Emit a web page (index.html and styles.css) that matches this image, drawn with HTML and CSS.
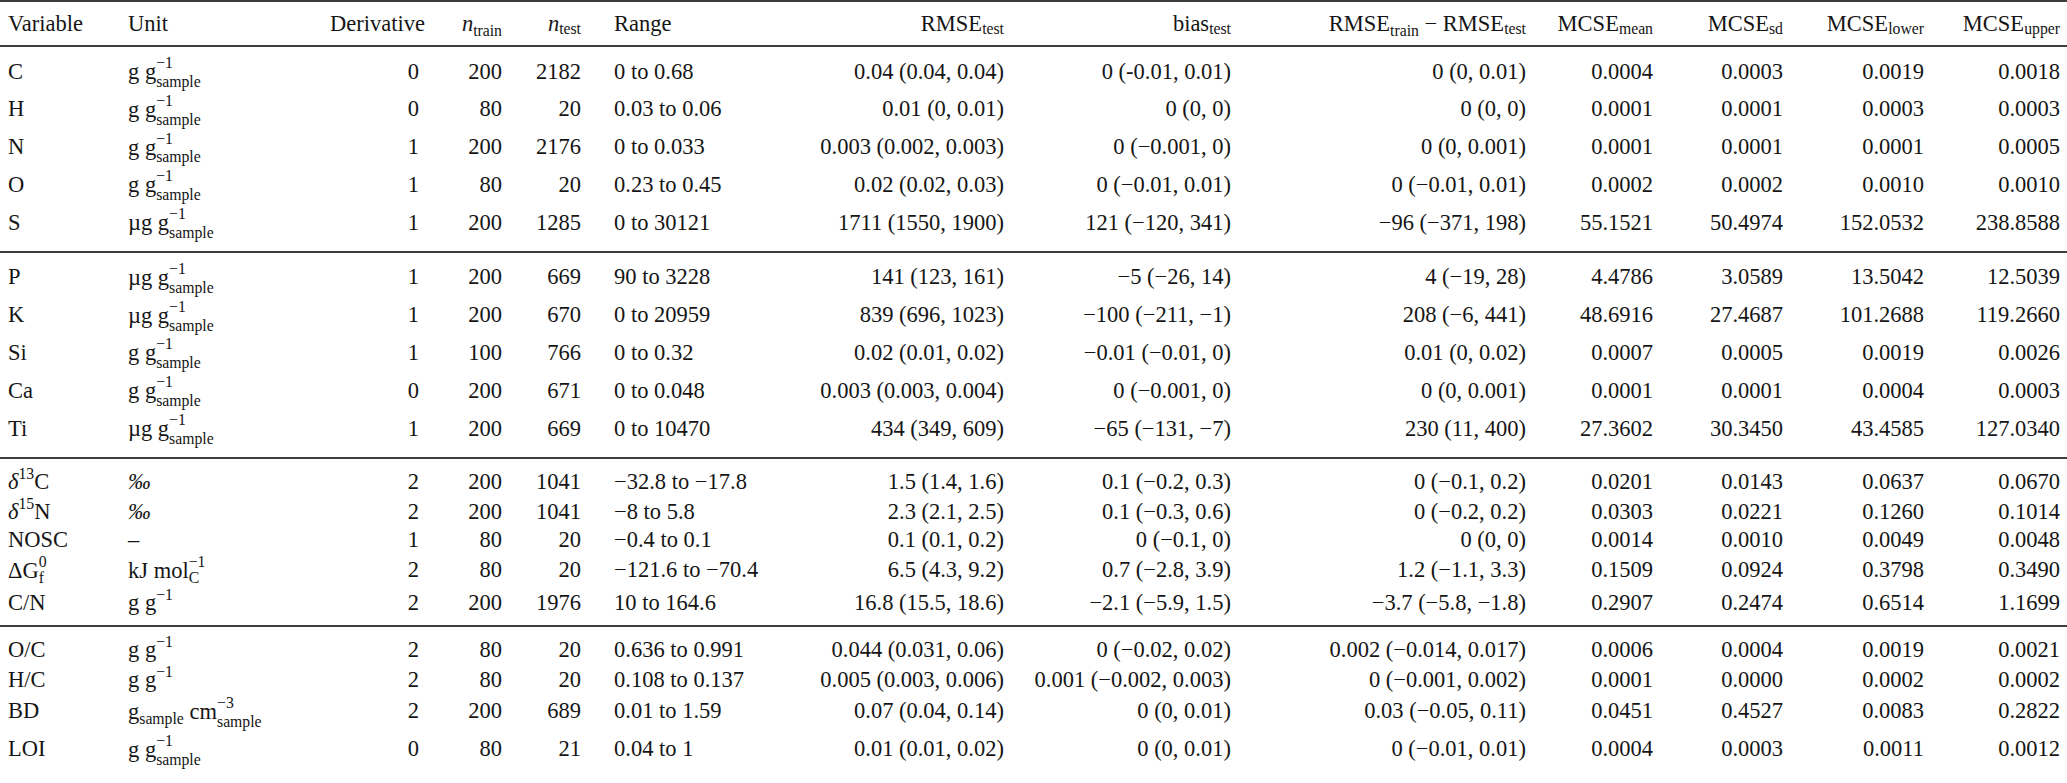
FILE: index.html
```html
<!DOCTYPE html>
<html>
<head>
<meta charset="utf-8">
<link rel="stylesheet" href="styles.css">
</head>
<body>
<table class="tbl">
<colgroup>
<col class="c1"><col class="c2"><col class="c3"><col class="c4"><col class="c5"><col class="c6"><col class="c7"><col class="c8"><col class="c9"><col class="c10"><col class="c11"><col class="c12"><col class="c13">
</colgroup>
<thead>
<tr>
<th class="l first">Variable</th><th class="l">Unit</th><th>Derivative</th><th><i>n</i><span class="hs lo">train</span></th><th><i>n</i><span class="hs">test</span></th><th class="l rg">Range</th><th>RMSE<span class="hs">test</span></th><th>bias<span class="hs">test</span></th><th>RMSE<span class="hs lo">train</span> − RMSE<span class="hs">test</span></th><th>MCSE<span class="hs">mean</span></th><th>MCSE<span class="hs">sd</span></th><th>MCSE<span class="hs">lower</span></th><th class="last">MCSE<span class="hs">upper</span></th>
</tr>
</thead>
<tbody>
<tr class="top"><td class="l first">C</td><td class="l">g g<span class="ss"><span>−1</span><span>sample</span></span></td><td>0</td><td>200</td><td>2182</td><td class="l rg">0 to 0.68</td><td>0.04 (0.04, 0.04)</td><td>0 (-0.01, 0.01)</td><td>0 (0, 0.01)</td><td>0.0004</td><td>0.0003</td><td>0.0019</td><td class="last">0.0018</td></tr>
<tr><td class="l first">H</td><td class="l">g g<span class="ss"><span>−1</span><span>sample</span></span></td><td>0</td><td>80</td><td>20</td><td class="l rg">0.03 to 0.06</td><td>0.01 (0, 0.01)</td><td>0 (0, 0)</td><td>0 (0, 0)</td><td>0.0001</td><td>0.0001</td><td>0.0003</td><td class="last">0.0003</td></tr>
<tr><td class="l first">N</td><td class="l">g g<span class="ss"><span>−1</span><span>sample</span></span></td><td>1</td><td>200</td><td>2176</td><td class="l rg">0 to 0.033</td><td>0.003 (0.002, 0.003)</td><td>0 (−0.001, 0)</td><td>0 (0, 0.001)</td><td>0.0001</td><td>0.0001</td><td>0.0001</td><td class="last">0.0005</td></tr>
<tr><td class="l first">O</td><td class="l">g g<span class="ss"><span>−1</span><span>sample</span></span></td><td>1</td><td>80</td><td>20</td><td class="l rg">0.23 to 0.45</td><td>0.02 (0.02, 0.03)</td><td>0 (−0.01, 0.01)</td><td>0 (−0.01, 0.01)</td><td>0.0002</td><td>0.0002</td><td>0.0010</td><td class="last">0.0010</td></tr>
<tr class="bot"><td class="l first">S</td><td class="l">µg g<span class="ss"><span>−1</span><span>sample</span></span></td><td>1</td><td>200</td><td>1285</td><td class="l rg">0 to 30121</td><td>1711 (1550, 1900)</td><td>121 (−120, 341)</td><td>−96 (−371, 198)</td><td>55.1521</td><td>50.4974</td><td>152.0532</td><td class="last">238.8588</td></tr>
</tbody>
<tbody>
<tr class="top"><td class="l first">P</td><td class="l">µg g<span class="ss"><span>−1</span><span>sample</span></span></td><td>1</td><td>200</td><td>669</td><td class="l rg">90 to 3228</td><td>141 (123, 161)</td><td>−5 (−26, 14)</td><td>4 (−19, 28)</td><td>4.4786</td><td>3.0589</td><td>13.5042</td><td class="last">12.5039</td></tr>
<tr><td class="l first">K</td><td class="l">µg g<span class="ss"><span>−1</span><span>sample</span></span></td><td>1</td><td>200</td><td>670</td><td class="l rg">0 to 20959</td><td>839 (696, 1023)</td><td>−100 (−211, −1)</td><td>208 (−6, 441)</td><td>48.6916</td><td>27.4687</td><td>101.2688</td><td class="last">119.2660</td></tr>
<tr><td class="l first">Si</td><td class="l">g g<span class="ss"><span>−1</span><span>sample</span></span></td><td>1</td><td>100</td><td>766</td><td class="l rg">0 to 0.32</td><td>0.02 (0.01, 0.02)</td><td>−0.01 (−0.01, 0)</td><td>0.01 (0, 0.02)</td><td>0.0007</td><td>0.0005</td><td>0.0019</td><td class="last">0.0026</td></tr>
<tr><td class="l first">Ca</td><td class="l">g g<span class="ss"><span>−1</span><span>sample</span></span></td><td>0</td><td>200</td><td>671</td><td class="l rg">0 to 0.048</td><td>0.003 (0.003, 0.004)</td><td>0 (−0.001, 0)</td><td>0 (0, 0.001)</td><td>0.0001</td><td>0.0001</td><td>0.0004</td><td class="last">0.0003</td></tr>
<tr class="bot"><td class="l first">Ti</td><td class="l">µg g<span class="ss"><span>−1</span><span>sample</span></span></td><td>1</td><td>200</td><td>669</td><td class="l rg">0 to 10470</td><td>434 (349, 609)</td><td>−65 (−131, −7)</td><td>230 (11, 400)</td><td>27.3602</td><td>30.3450</td><td>43.4585</td><td class="last">127.0340</td></tr>
</tbody>
<tbody>
<tr class="top"><td class="l first"><i>δ</i><span class="sp">13</span>C</td><td class="l"><i>‰</i></td><td>2</td><td>200</td><td>1041</td><td class="l rg">−32.8 to −17.8</td><td>1.5 (1.4, 1.6)</td><td>0.1 (−0.2, 0.3)</td><td>0 (−0.1, 0.2)</td><td>0.0201</td><td>0.0143</td><td>0.0637</td><td class="last">0.0670</td></tr>
<tr><td class="l first"><i>δ</i><span class="sp">15</span>N</td><td class="l"><i>‰</i></td><td>2</td><td>200</td><td>1041</td><td class="l rg">−8 to 5.8</td><td>2.3 (2.1, 2.5)</td><td>0.1 (−0.3, 0.6)</td><td>0 (−0.2, 0.2)</td><td>0.0303</td><td>0.0221</td><td>0.1260</td><td class="last">0.1014</td></tr>
<tr><td class="l first">NOSC</td><td class="l">–</td><td>1</td><td>80</td><td>20</td><td class="l rg">−0.4 to 0.1</td><td>0.1 (0.1, 0.2)</td><td>0 (−0.1, 0)</td><td>0 (0, 0)</td><td>0.0014</td><td>0.0010</td><td>0.0049</td><td class="last">0.0048</td></tr>
<tr><td class="l first">ΔG<span class="ss sm"><span>0</span><span>f</span></span></td><td class="l">kJ mol<span class="ss sm"><span>−1</span><span>C</span></span></td><td>2</td><td>80</td><td>20</td><td class="l rg">−121.6 to −70.4</td><td>6.5 (4.3, 9.2)</td><td>0.7 (−2.8, 3.9)</td><td>1.2 (−1.1, 3.3)</td><td>0.1509</td><td>0.0924</td><td>0.3798</td><td class="last">0.3490</td></tr>
<tr class="bot"><td class="l first">C/N</td><td class="l">g g<span class="sp">−1</span></td><td>2</td><td>200</td><td>1976</td><td class="l rg">10 to 164.6</td><td>16.8 (15.5, 18.6)</td><td>−2.1 (−5.9, 1.5)</td><td>−3.7 (−5.8, −1.8)</td><td>0.2907</td><td>0.2474</td><td>0.6514</td><td class="last">1.1699</td></tr>
</tbody>
<tbody>
<tr class="top"><td class="l first">O/C</td><td class="l">g g<span class="sp">−1</span></td><td>2</td><td>80</td><td>20</td><td class="l rg">0.636 to 0.991</td><td>0.044 (0.031, 0.06)</td><td>0 (−0.02, 0.02)</td><td>0.002 (−0.014, 0.017)</td><td>0.0006</td><td>0.0004</td><td>0.0019</td><td class="last">0.0021</td></tr>
<tr><td class="l first">H/C</td><td class="l">g g<span class="sp">−1</span></td><td>2</td><td>80</td><td>20</td><td class="l rg">0.108 to 0.137</td><td>0.005 (0.003, 0.006)</td><td>0.001 (−0.002, 0.003)</td><td>0 (−0.001, 0.002)</td><td>0.0001</td><td>0.0000</td><td>0.0002</td><td class="last">0.0002</td></tr>
<tr><td class="l first">BD</td><td class="l">g<span class="sb">sample</span> cm<span class="ss"><span>−3</span><span>sample</span></span></td><td>2</td><td>200</td><td>689</td><td class="l rg">0.01 to 1.59</td><td>0.07 (0.04, 0.14)</td><td>0 (0, 0.01)</td><td>0.03 (−0.05, 0.11)</td><td>0.0451</td><td>0.4527</td><td>0.0083</td><td class="last">0.2822</td></tr>
<tr class="bot end"><td class="l first">LOI</td><td class="l">g g<span class="ss"><span>−1</span><span>sample</span></span></td><td>0</td><td>80</td><td>21</td><td class="l rg">0.04 to 1</td><td>0.01 (0.01, 0.02)</td><td>0 (0, 0.01)</td><td>0 (−0.01, 0.01)</td><td>0.0004</td><td>0.0003</td><td>0.0011</td><td class="last">0.0012</td></tr>
</tbody>
</table>
</body>
</html>
```
FILE: styles.css
```css
html, body {
  margin: 0;
  padding: 0;
  background: #ffffff;
}
body {
  font-family: "Liberation Serif", "Times New Roman", serif;
  font-size: 22.5px;
  color: #151515;
}
.tbl {
  width: 2067px;
  table-layout: fixed;
  border-collapse: collapse;
  border-top: 2px solid #3d3d3d;
  border-bottom: 2px solid #3d3d3d;
}
.c1 { width: 128px; }
.c2 { width: 202px; }
.c3 { width: 89px; }
.c4 { width: 83px; }
.c5 { width: 79px; }
.c6 { width: 229px; }
.c7 { width: 194px; }
.c8 { width: 227px; }
.c9 { width: 295px; }
.c10 { width: 127px; }
.c11 { width: 130px; }
.c12 { width: 141px; }
.c13 { width: 143px; }
th, td {
  padding: 0;
  text-align: right;
  vertical-align: baseline;
  white-space: nowrap;
  font-weight: normal;
  line-height: 28px;
}
th {
  line-height: 43px;
}
thead {
  border-bottom: 2px solid #3d3d3d;
}
tbody + tbody {
  border-top: 2px solid #3d3d3d;
}
.l { text-align: left; }
.first { padding-left: 8px; }
.rg { padding-left: 33px; }
.last { padding-right: 7px; }
tr.top td { padding-top: 7px; }
tr.bot td { padding-bottom: 8px; }
tr.end td { padding-bottom: 16px; }
.hs {
  font-size: 0.7em;
  vertical-align: -3px;
  line-height: 1;
}
.hs.lo { vertical-align: -5px; }
.ss {
  display: inline-flex;
  flex-direction: column;
  font-size: 0.7em;
  line-height: 1.2;
  vertical-align: 10.5px;
}
.ss.sm { line-height: 1.05; }
.sp {
  font-size: 0.7em;
  line-height: 1;
  vertical-align: 10px;
}
.sb {
  font-size: 0.7em;
  line-height: 1;
  vertical-align: -5px;
}
```
